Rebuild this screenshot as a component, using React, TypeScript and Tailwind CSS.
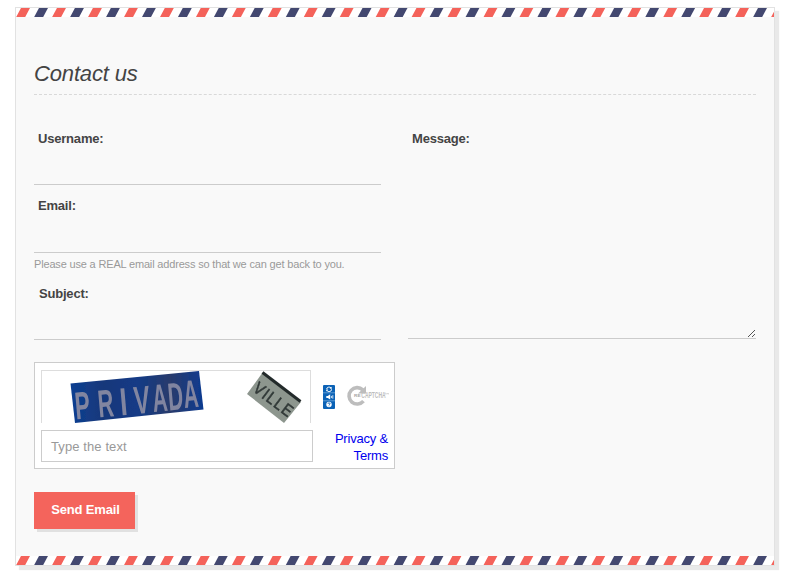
import React from "react";

const STRIPES = Array.from({ length: 43 }, (_, i) => i);

function AirmailStripe() {
  return (
    <svg width="758" height="9" viewBox="0 0 758 9" className="block shrink-0 bg-white">
      {STRIPES.map((i) => {
        const x = i * 17.975;
        return (
          <polygon
            key={i}
            points={`${x + 5},0 ${x + 14},0 ${x + 9.2},9 ${x + 0.2},9`}
            fill={i % 2 === 0 ? "#f4625a" : "#434870"}
          />
        );
      })}
    </svg>
  );
}

function CaptchaImage() {
  return (
    <svg width="269" height="52" viewBox="0 0 269 52" className="block">
      <defs>
        <filter id="soft" x="-5%" y="-5%" width="110%" height="110%">
          <feGaussianBlur stdDeviation="0.6" />
        </filter>
        <linearGradient id="plate" x1="0" x2="1">
          <stop offset="0" stopColor="#0d3f92" />
          <stop offset="0.25" stopColor="#17387a" />
          <stop offset="0.5" stopColor="#123a86" />
          <stop offset="0.75" stopColor="#293b6c" />
          <stop offset="1" stopColor="#0d3a90" />
        </linearGradient>
      </defs>
      <g filter="url(#soft)">
        <polygon points="28.5,12.500 157,0 161.500,38.500 33,52" fill="url(#plate)" />
        <g
          fontFamily="Liberation Sans, Arial, sans-serif"
          fontSize="39"
          fontWeight="bold"
          fill="#8185a0"
        >
          <text transform="translate(34 48.500) rotate(-5) scale(.58 1)">P</text>
          <text transform="translate(57 46.500) rotate(-5) scale(.56 1)">R</text>
          <text transform="translate(79 44.500) rotate(-5) scale(.68 1)">I</text>
          <text transform="translate(93 43) rotate(-5) scale(.62 1)">V</text>
          <text transform="translate(111.500 41) rotate(-5) scale(.53 1)">A</text>
          <text transform="translate(127 39.500) rotate(-5) scale(.54 1)">D</text>
          <text transform="translate(142.500 37) rotate(-5) scale(.53 1)">A</text>
        </g>
        <polygon points="221,1 259,31 242,52 205,23" fill="#8d968e" />
        <path d="M220.500 1.500L258.500 30.500" stroke="#242a2b" strokeWidth="3" />
        <text
          transform="translate(210 19.500) rotate(37) scale(.86 1)"
          fontFamily="Liberation Sans, Arial, sans-serif"
          fontSize="17"
          stroke="#303837"
          strokeWidth="0.5"
          fill="#303837"
          letterSpacing="1.500"
        >
          VILLE
        </text>
      </g>
    </svg>
  );
}

function CaptchaControls() {
  return (
    <svg width="12" height="24" viewBox="0 0 12 24" className="block">
      <rect width="12" height="24" rx="1" fill="#0b62b6" />
      <path d="M0 7.800h12M0 15.800h12" stroke="#7fb1df" strokeWidth="0.7" />
      <path d="M3.700 4A2.400 2 0 0 1 8 2.900M8.500 4.300A2.400 2 0 0 1 4 5.500" fill="none" stroke="#fff" strokeWidth="1" />
      <path d="M8.800 1.800v2H6.700zM3.200 6.600V4.600h2.200z" fill="#fff" />
      <path d="M3.300 11h1.500L7.200 9.200v5.400L4.800 13H3.300z" fill="#fff" />
      <path d="M8.400 10.900v2.200M9.800 10.200v3.500" stroke="#fff" strokeWidth="0.8" />
      <circle cx="6" cy="19.500" r="2.700" fill="#fff" />
      <path d="M5 18.800q0-1 1-1t1 .9q0 .6-1 1.100M6 20.500v.8" fill="none" stroke="#0b62b6" strokeWidth="0.900" />
    </svg>
  );
}

function CaptchaLogo() {
  return (
    <svg width="42" height="22" viewBox="0 0 42 22" className="block">
      <path d="M16.500 16.200A8.200 8.200 0 1 1 15.800 4.800" fill="none" stroke="#bdbdbd" strokeWidth="3.600" />
      <path d="M19 1v7.500h-8z" fill="#bdbdbd" />
      <text x="7" y="12" fontFamily="Liberation Sans, Arial, sans-serif" fontSize="4" fontWeight="bold" fill="#a6a6a6" textLength="6.500" lengthAdjust="spacingAndGlyphs">RE</text>
      <text transform="translate(14.300 13.300) scale(.6 1)" fontFamily="Liberation Sans, Arial, sans-serif" fontSize="8.300" fontWeight="bold" fill="#bdbdbd">CAPTCHA</text>
      <path d="M37.500 8h1.600M38.300 8v1.600M39.800 9.600V8l.8 1 .8-1v1.600" fill="none" stroke="#b5b5b5" strokeWidth="0.400" />
    </svg>
  );
}

function Label({ children, className = "pl-1" }: { children: React.ReactNode; className?: string }) {
  return (
    <label className={`block text-[13px] leading-[18px] font-bold tracking-[-0.2px] text-[#444] ${className}`}>
      {children}
    </label>
  );
}

export default function App() {
  return (
    <div className="h-[576px] w-[800px] overflow-hidden bg-white pt-[7px] pl-[15px] font-['Liberation_Sans',Arial,sans-serif]">
      <main className="flex h-[559px] w-[760px] flex-col border border-[#e2e2e2] bg-[#f9f9f9] shadow-[4px_4px_1px_#e9e9e9]">
        <AirmailStripe />
        <form className="flex-1 pr-[18px] pl-[18px]">
          <div className="h-[78px] border-b border-dashed border-[#d9d9d9] pt-[44px]">
            <h1 className="text-[22px] leading-[26px] tracking-[-0.15px] text-[#444] italic">Contact us</h1>
          </div>
          <div className="flex gap-[27px]">
            <div className="w-[347px]">
              <div className="h-[90px] border-b border-[#ccc] pt-[35px]">
                <Label>Username:</Label>
              </div>
              <div className="h-[68px] border-b border-[#ccc] pt-[12px]">
                <Label>Email:</Label>
              </div>
              <p className="h-[20px] pt-[3px] text-[11px] leading-[16px] tracking-[-0.17px] whitespace-nowrap text-[#999]">
                Please use a REAL email address so that we can get back to you.
              </p>
              <div className="h-[67px] border-b border-[#ccc] pt-[12px]">
                <Label className="pl-[5px]">Subject:</Label>
              </div>
            </div>
            <div className="h-[244px] w-[348px] border-b border-[#ccc] pt-[35px]">
              <Label>Message:</Label>
              <div className="flex h-[190px] items-end justify-end">
                <svg width="8" height="8" viewBox="0 0 8 8" className="block" shapeRendering="crispEdges">
                  {[0, 1, 2, 3, 4, 5, 6].map((i) => (
                    <rect key={i} x={i} y={6 - i} width="1" height="1" fill="#555" />
                  ))}
                  {[0, 1, 2].map((i) => (
                    <rect key={i} x={4 + i} y={6 - i} width="1" height="1" fill="#555" />
                  ))}
                </svg>
              </div>
            </div>
          </div>
          <section className="mt-[22px] flex h-[107px] w-[361px] justify-between border border-[#ccc] bg-white px-[6px] py-[7px]">
            <div className="flex w-[272px] flex-col justify-between">
              <div className="h-[53px] w-[270px] border border-b-0 border-[#ddd]">
                <CaptchaImage />
              </div>
              <div className="-mb-[1px] flex h-[32px] items-center border border-[#ccc] pt-[2px] pl-[9px] text-[13px] tracking-[0.1px] text-[#999]">
                Type the text
              </div>
            </div>
            <div className="flex w-[66px] flex-col items-end justify-between">
              <div className="mt-[15px] flex gap-3 self-start pl-[1px]">
                <CaptchaControls />
                <CaptchaLogo />
              </div>
              <a className="-mb-[3px] text-right text-[13px] leading-[17px] tracking-[-0.2px] text-[#0000ee]">
                Privacy &amp;
                <br />
                Terms
              </a>
            </div>
          </section>
          <button
            type="button"
            className="mt-[23px] block h-[37px] w-[101px] bg-[#f4645c] pb-[2px] pl-[2px] text-[13px] leading-[35px] font-bold tracking-[-0.15px] text-white shadow-[3px_3px_0_#e1e1e1]"
          >
            Send Email
          </button>
        </form>
        <AirmailStripe />
      </main>
    </div>
  );
}
